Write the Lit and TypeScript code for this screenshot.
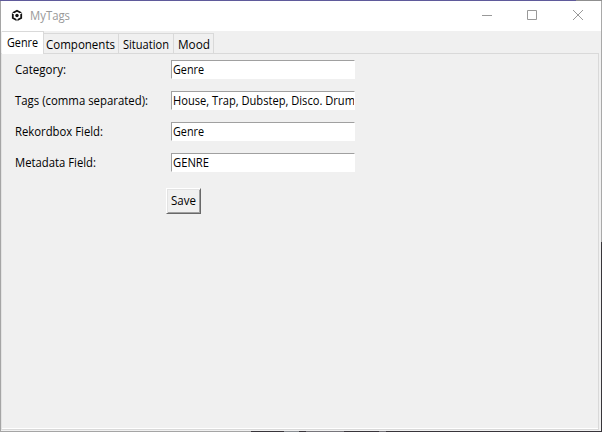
import { LitElement, html, css, svg } from "lit";
import { customElement, property } from "lit/decorators.js";

/* Single-line label stretched to an exact width */
@customElement("fit-text")
class FitText extends LitElement {
  @property() text = "";
  @property({ type: Number }) w = 40;
  static styles = css`
    :host { display: block; height: 18px; }
    svg { display: block; overflow: visible; font: 12px "Open Sans", "Noto Sans", sans-serif; fill: currentColor; }
  `;
  render() {
    return html`<svg width=${this.w} height="18">${svg`<text x="0" y="13" textLength=${this.w} lengthAdjust="spacingAndGlyphs">${this.text}</text>`}</svg>`;
  }
}

const tabs = [
  { name: "Components", w: 69, cls: "components" },
  { name: "Situation", w: 46, cls: "situation" },
  { name: "Mood", w: 32, cls: "mood" },
];
const rows = [
  { label: "Category:", lw: 51, value: "Genre", vw: 31 },
  { label: "Tags (comma separated):", lw: 133, value: "House, Trap, Dubstep, Disco. Drum", vw: 182 },
  { label: "Rekordbox Field:", lw: 88, value: "Genre", vw: 31 },
  { label: "Metadata Field:", lw: 81, value: "GENRE", vw: 36 },
];

@customElement("app-root")
class AppRoot extends LitElement {
  static styles = css`
    :host { display: block; width: 602px; height: 432px; overflow: hidden; }
    * { box-sizing: border-box; }
    .window {
      width: 602px; height: 432px; display: grid;
      grid-template: 1px 430px 1px / 1px 600px 1px;
      background: #f0f0f0; color: #000;
    }
    .top { grid-area: 1 / 1 / 2 / 4; background: linear-gradient(90deg, #5f5a9b 576px, #8f8f8f 576px); }
    .left { grid-area: 2 / 1 / 4 / 2; background: #a5a5a5; }
    .right { grid-area: 2 / 3 / 4 / 4; background: linear-gradient(#a9a9a9 241px, #38363a 241px); }
    .bottom { grid-area: 3 / 1 / 4 / 4; background: linear-gradient(90deg, #a5a5a5 251px, #38343a 251px, #38343a 284px, #8c9095 284px, #8c9095 299px, #38343a 299px, #38343a 306px, #77757b 306px, #77757b 344px, #38343a 344px, #38343a 379px, #77757b 379px, #77757b 386px, #38343a 386px); }
    .body { grid-area: 2 / 2; display: flex; flex-direction: column; }
    .title { height: 30px; background: #fff; display: flex; align-items: flex-start; color: #999; }
    .logo { margin: 8px 0 0 10px; width: 12px; height: 13px; flex: none; }
    .title fit-text { margin: 6px 0 0 7px; width: 40px; }
    .controls { margin: 9px 0 0 411px; display: flex; flex: none; }
    .tabs { display: flex; height: 22px; align-items: flex-start; padding-left: 1px; }
    .tab { height: 20px; margin-top: 2px; border-top: 1px solid #d9d9d9; border-right: 1px solid #d9d9d9; padding-top: 2px; }
    .active { width: 42px; height: 23px; margin-top: 0; background: #fff; padding: 2px 0 0 5px; z-index: 1; }
    .components { width: 75px; padding-left: 2px; }
    .situation { width: 55px; padding-left: 4px; }
    .mood { width: 40px; padding-left: 4px; }
    .pane {
      height: 377px; width: 598px; border-top: 1px solid #d9d9d9; border-right: 1px solid #d9d9d9;
      border-left: 1px solid #e3e3e3; padding: 6px 0 0 12px; display: flex; flex-direction: column;
      border-bottom: 1px solid #d9d9d9; box-shadow: inset 0 -1px #fff;
    }
    .row { display: grid; grid-template-columns: 157px 184px; height: 19px; margin-bottom: 12px; }
    .row > fit-text { margin: 1px 0 0 1px; }
    .field { background: #fff; border: 1px solid; border-color: #a0a0a0 #fff #fff #a0a0a0; padding-left: 1px; height: 19px; overflow: hidden; }
    .save {
      width: 35px; height: 26px; margin: 4px 0 0 152px; padding: 3px 0 0 4px;
      border: 1px solid; border-color: #fff #696969 #696969 #fff;
      box-shadow: inset 1px 1px #e3e3e3, inset -1px -1px #a0a0a0;
    }
  `;
  render() {
    return html`
      <div class="window">
        <div class="top"></div><div class="left"></div><div class="right"></div><div class="bottom"></div>
        <div class="body">
          <div class="title">
            <svg class="logo" viewBox="0 0 12 13" fill="none">
              <path d="M6 1.700 10.200 4v5L6 11.300 1.800 9V4Z" stroke="#111" stroke-width="1.800"/>
              <path d="M6 9v4M3.500 5 0 3.200M8.500 5 12 3.200" stroke="#fff" stroke-width="1"/>
              <circle cx="6" cy="6.500" r="1.700" fill="#111"/>
            </svg>
            <fit-text text="MyTags" w="40"></fit-text>
            <svg class="controls" width="110" height="12" viewBox="0 0 110 12" fill="none" stroke="#999">
              <path d="M1 5.500h10"/>
              <path d="M46.500.5h9v9h-9z"/>
              <path d="m92 0 10 10M102 0 92 10"/>
            </svg>
          </div>
          <div class="tabs">
            <div class="tab active"><fit-text text="Genre" w="31"></fit-text></div>
            ${tabs.map((t) => html`<div class="tab ${t.cls}"><fit-text text=${t.name} w=${t.w}></fit-text></div>`)}
          </div>
          <div class="pane">
            ${rows.map((r) => html`<div class="row">
              <fit-text text=${r.label} w=${r.lw}></fit-text>
              <div class="field"><fit-text text=${r.value} w=${r.vw}></fit-text></div>
            </div>`)}
            <div class="save"><fit-text text="Save" w="25"></fit-text></div>
          </div>
        </div>
      </div>`;
  }
}
